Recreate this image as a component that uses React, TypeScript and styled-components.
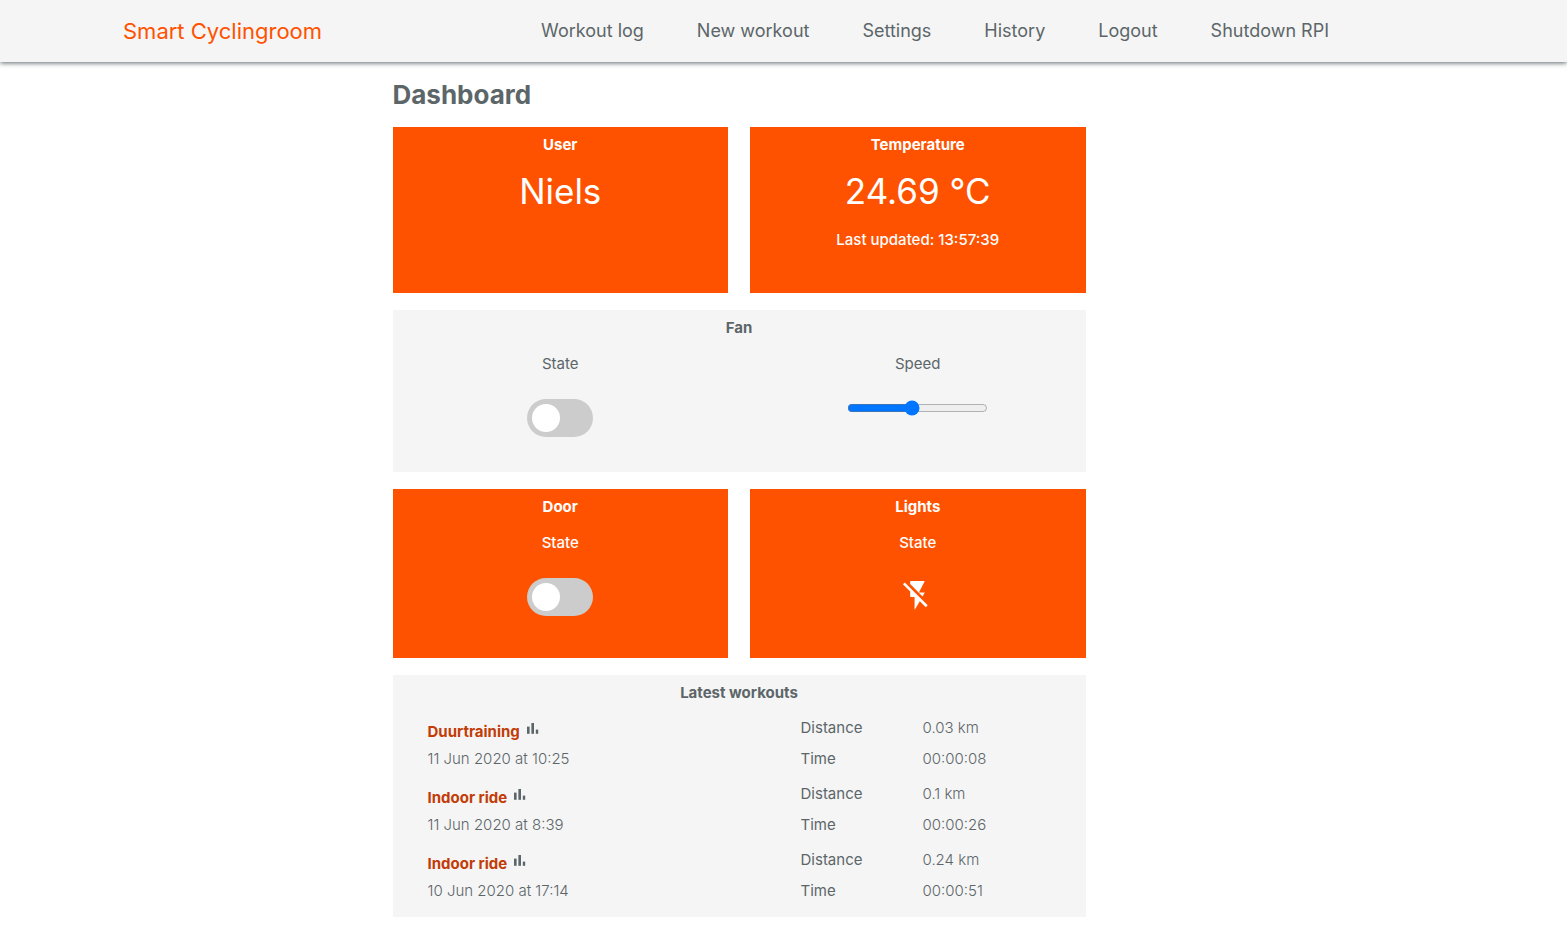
import React, { useState } from "react";
import styled, { createGlobalStyle } from "styled-components";
import { MdFlashOff } from "react-icons/md";

const GlobalStyle = createGlobalStyle`
  *, *::before, *::after { box-sizing: border-box; }
  body {
    margin: 0;
    background: #ffffff;
    color: #5c6669;
    font-family: Inter, "Liberation Sans", sans-serif;
    font-size: 15px;
    line-height: 18px;
  }
  h1, h2, h3, p, ul, dl, dd { margin: 0; padding: 0; }
`;

const Header = styled.header`
  display: flex;
  align-items: center;
  justify-content: space-between;
  height: 62px;
  padding: 0 238px 0 123px;
  background: #f5f5f5;
  box-shadow: 0 1px 5px #5c6669;
`;

const Brand = styled.a`
  color: #ff5200;
  font-size: 22px;
  line-height: 26px;
  text-decoration: none;
`;

const NavList = styled.ul`
  display: flex;
  gap: 53px;
  list-style: none;
`;

const NavLink = styled.a`
  color: #5c6669;
  font-size: 18px;
  line-height: 22px;
  text-decoration: none;
`;

const Main = styled.main`
  padding: 17px 213px 19px 124px;
`;

const Content = styled.div`
  display: grid;
  grid-template-columns: 1fr 1fr;
  gap: 17px 22px;
  max-width: 693px;
  margin: 0 auto;
`;

const PageTitle = styled.h1`
  grid-column: 1 / -1;
  font-size: 26px;
  font-weight: 700;
  line-height: 31px;
`;

const Card = styled.section<{ $accent?: boolean }>`
  grid-column: ${(p) => (p.$accent ? "auto" : "1 / -1")};
  padding: 9px 0 10px;
  background: ${(p) => (p.$accent ? "#ff5200" : "#f5f5f5")};
  color: ${(p) => (p.$accent ? "#ffffff" : "#5c6669")};
  font-weight: ${(p) => (p.$accent ? 500 : 400)};
  text-align: center;
`;

const CardTitle = styled.h2`
  font-size: 15px;
  font-weight: 700;
  line-height: 18px;
`;

const BigValue = styled.p`
  margin-top: 16px;
  font-size: 35px;
  font-weight: 400;
  line-height: 43px;
`;

const Note = styled.p`
  margin: 18px 0 34px;
`;

const Split = styled.div`
  display: grid;
  grid-template-columns: 1fr 1fr;
  column-gap: 22px;
`;

const Control = styled.div`
  display: flex;
  flex-direction: column;
  align-items: center;
  padding-top: 18px;
`;

const Switch = styled.input<{ $roomy?: boolean }>`
  appearance: none;
  width: 66px;
  height: 38px;
  margin: 26px 0 ${(p) => (p.$roomy ? 32 : 25)}px;
  padding: 5px;
  border-radius: 19px;
  background: #cccccc;
  cursor: pointer;

  &::before {
    content: "";
    display: block;
    width: 28px;
    height: 28px;
    border-radius: 50%;
    background: #ffffff;
    transition: margin 0.2s;
  }
  &:checked { background: #2196f3; }
  &:checked::before { margin-left: 28px; }
`;

const Range = styled.input`
  width: 141px;
  height: 16px;
  margin: 27px 0 0;
`;

const LightIcon = styled(MdFlashOff)`
  width: 35px;
  height: 35px;
  margin-top: 26px;
`;

const WorkoutList = styled.ul`
  display: grid;
  gap: 4px;
  padding: 10px 0 1px 35px;
  list-style: none;
  text-align: left;
`;

const Workout = styled.li`
  display: grid;
  grid-template-columns: 373fr 285fr;
`;

const WorkoutName = styled.h3`
  display: flex;
  gap: 7px;
  height: 34px;
  font-size: 15px;
  line-height: 40px;
`;

const WorkoutLink = styled.a`
  color: #c23c07;
  font-weight: 700;
  text-decoration: none;
`;

const ChartGlyph = styled.svg`
  width: 12px;
  height: 11px;
  margin-top: 11px;
  fill: currentColor;
`;

const WorkoutDate = styled.p`
  font-weight: 300;
  line-height: 26px;
`;

const Stats = styled.dl`
  display: grid;
  grid-template-columns: 122px 1fr;
  grid-auto-rows: 31px;
  line-height: 31px;
`;

const StatValue = styled.dd`
  font-weight: 300;
`;

const navItems = ["Workout log", "New workout", "Settings", "History", "Logout", "Shutdown RPI"];

const workouts = [
  { name: "Duurtraining", date: "11 Jun 2020 at 10:25", distance: "0.03 km", time: "00:00:08" },
  { name: "Indoor ride", date: "11 Jun 2020 at 8:39", distance: "0.1 km", time: "00:00:26" },
  { name: "Indoor ride", date: "10 Jun 2020 at 17:14", distance: "0.24 km", time: "00:00:51" },
];

function ChartIcon() {
  return (
    <ChartGlyph viewBox="0 0 12 11" aria-hidden="true">
      <rect x="0" y="3.6" width="2.6" height="7.2" />
      <rect x="4.4" y="0" width="2.6" height="10.8" />
      <rect x="8.8" y="6.6" width="2.4" height="4.2" />
    </ChartGlyph>
  );
}

export default function App() {
  const [fan, setFan] = useState(false);
  const [speed, setSpeed] = useState(45);
  const [door, setDoor] = useState(false);

  return (
    <>
      <GlobalStyle />
      <Header>
        <Brand href="#">Smart Cyclingroom</Brand>
        <nav>
          <NavList>
            {navItems.map((item) => (
              <li key={item}>
                <NavLink href="#">{item}</NavLink>
              </li>
            ))}
          </NavList>
        </nav>
      </Header>
      <Main>
        <Content>
          <PageTitle>Dashboard</PageTitle>
          <Card $accent>
            <CardTitle>User</CardTitle>
            <BigValue>Niels</BigValue>
          </Card>
          <Card $accent>
            <CardTitle>Temperature</CardTitle>
            <BigValue>24.69 °C</BigValue>
            <Note>Last updated: 13:57:39</Note>
          </Card>
          <Card>
            <CardTitle>Fan</CardTitle>
            <Split>
              <Control>
                <label htmlFor="fan-state">State</label>
                <Switch
                  id="fan-state"
                  type="checkbox"
                  checked={fan}
                  onChange={(e) => setFan(e.target.checked)}
                />
              </Control>
              <Control>
                <label htmlFor="fan-speed">Speed</label>
                <Range
                  id="fan-speed"
                  type="range"
                  min={0}
                  max={100}
                  value={speed}
                  onChange={(e) => setSpeed(Number(e.target.value))}
                />
              </Control>
            </Split>
          </Card>
          <Card $accent>
            <CardTitle>Door</CardTitle>
            <Control>
              <label htmlFor="door-state">State</label>
              <Switch
                $roomy
                id="door-state"
                type="checkbox"
                checked={door}
                onChange={(e) => setDoor(e.target.checked)}
              />
            </Control>
          </Card>
          <Card $accent>
            <CardTitle>Lights</CardTitle>
            <Control>
              <span>State</span>
              <LightIcon />
            </Control>
          </Card>
          <Card>
            <CardTitle>Latest workouts</CardTitle>
            <WorkoutList>
              {workouts.map((w) => (
                <Workout key={w.date}>
                  <div>
                    <WorkoutName>
                      <WorkoutLink href="#">{w.name}</WorkoutLink>
                      <ChartIcon />
                    </WorkoutName>
                    <WorkoutDate>{w.date}</WorkoutDate>
                  </div>
                  <Stats>
                    <dt>Distance</dt>
                    <StatValue>{w.distance}</StatValue>
                    <dt>Time</dt>
                    <StatValue>{w.time}</StatValue>
                  </Stats>
                </Workout>
              ))}
            </WorkoutList>
          </Card>
        </Content>
      </Main>
    </>
  );
}
